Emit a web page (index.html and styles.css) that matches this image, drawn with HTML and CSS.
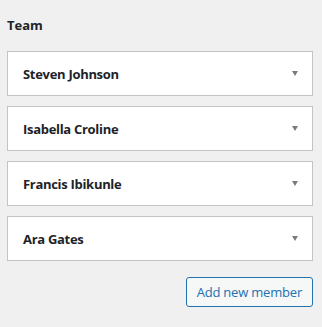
FILE: index.html
```html
<!DOCTYPE html>
<html lang="en">
<head>
    <meta charset="UTF-8">
    <meta name="viewport" content="width=device-width, initial-scale=1.0">
    <title>Team</title>
    <link rel="stylesheet" href="styles.css">
</head>
<body>
    <div class="panel">
        <h2 class="panel-title">Team</h2>
        <div class="members">
            <div class="member">
                <span class="member-name">Steven Johnson</span>
                <span class="toggle"></span>
            </div>
            <div class="member">
                <span class="member-name">Isabella Croline</span>
                <span class="toggle"></span>
            </div>
            <div class="member">
                <span class="member-name">Francis Ibikunle</span>
                <span class="toggle"></span>
            </div>
            <div class="member">
                <span class="member-name">Ara Gates</span>
                <span class="toggle"></span>
            </div>
        </div>
        <div class="actions">
            <button class="button">Add new member</button>
        </div>
    </div>
</body>
</html>
```

FILE: styles.css
```css
body {
    margin: 0;
    background-color: #f0f0f1;
    color: #1d2327;
    font-family: 'Open Sans', sans-serif;
    font-size: 13px;
}

.panel {
    padding: 15px 9px 0 7px;
}

.panel-title {
    margin: 0 0 16px;
    font-size: 13px;
    line-height: 20px;
    font-weight: 700;
}

.members {
    display: flex;
    flex-direction: column;
    gap: 10px;
}

.member {
    display: flex;
    align-items: center;
    justify-content: space-between;
    height: 43px;
    padding: 0 14px 0 15px;
    background: #fff;
    border: 1px solid #c3c4c7;
}

.member-name {
    font-weight: 700;
    letter-spacing: -0.3px;
}

/* small dropdown arrow */
.toggle {
    width: 0;
    height: 0;
    border-left: 3.5px solid transparent;
    border-right: 3.5px solid transparent;
    border-top: 5px solid #787c82;
}

.actions {
    display: flex;
    justify-content: flex-end;
    margin-top: 16px;
}

.button {
    height: 30px;
    padding: 0 10px;
    background: #f6f7f7;
    color: #2271b1;
    border: 1px solid #2271b1;
    border-radius: 3px;
    font-family: 'Open Sans', sans-serif;
    font-size: 13px;
    letter-spacing: -0.2px;
    cursor: pointer;
}
```
